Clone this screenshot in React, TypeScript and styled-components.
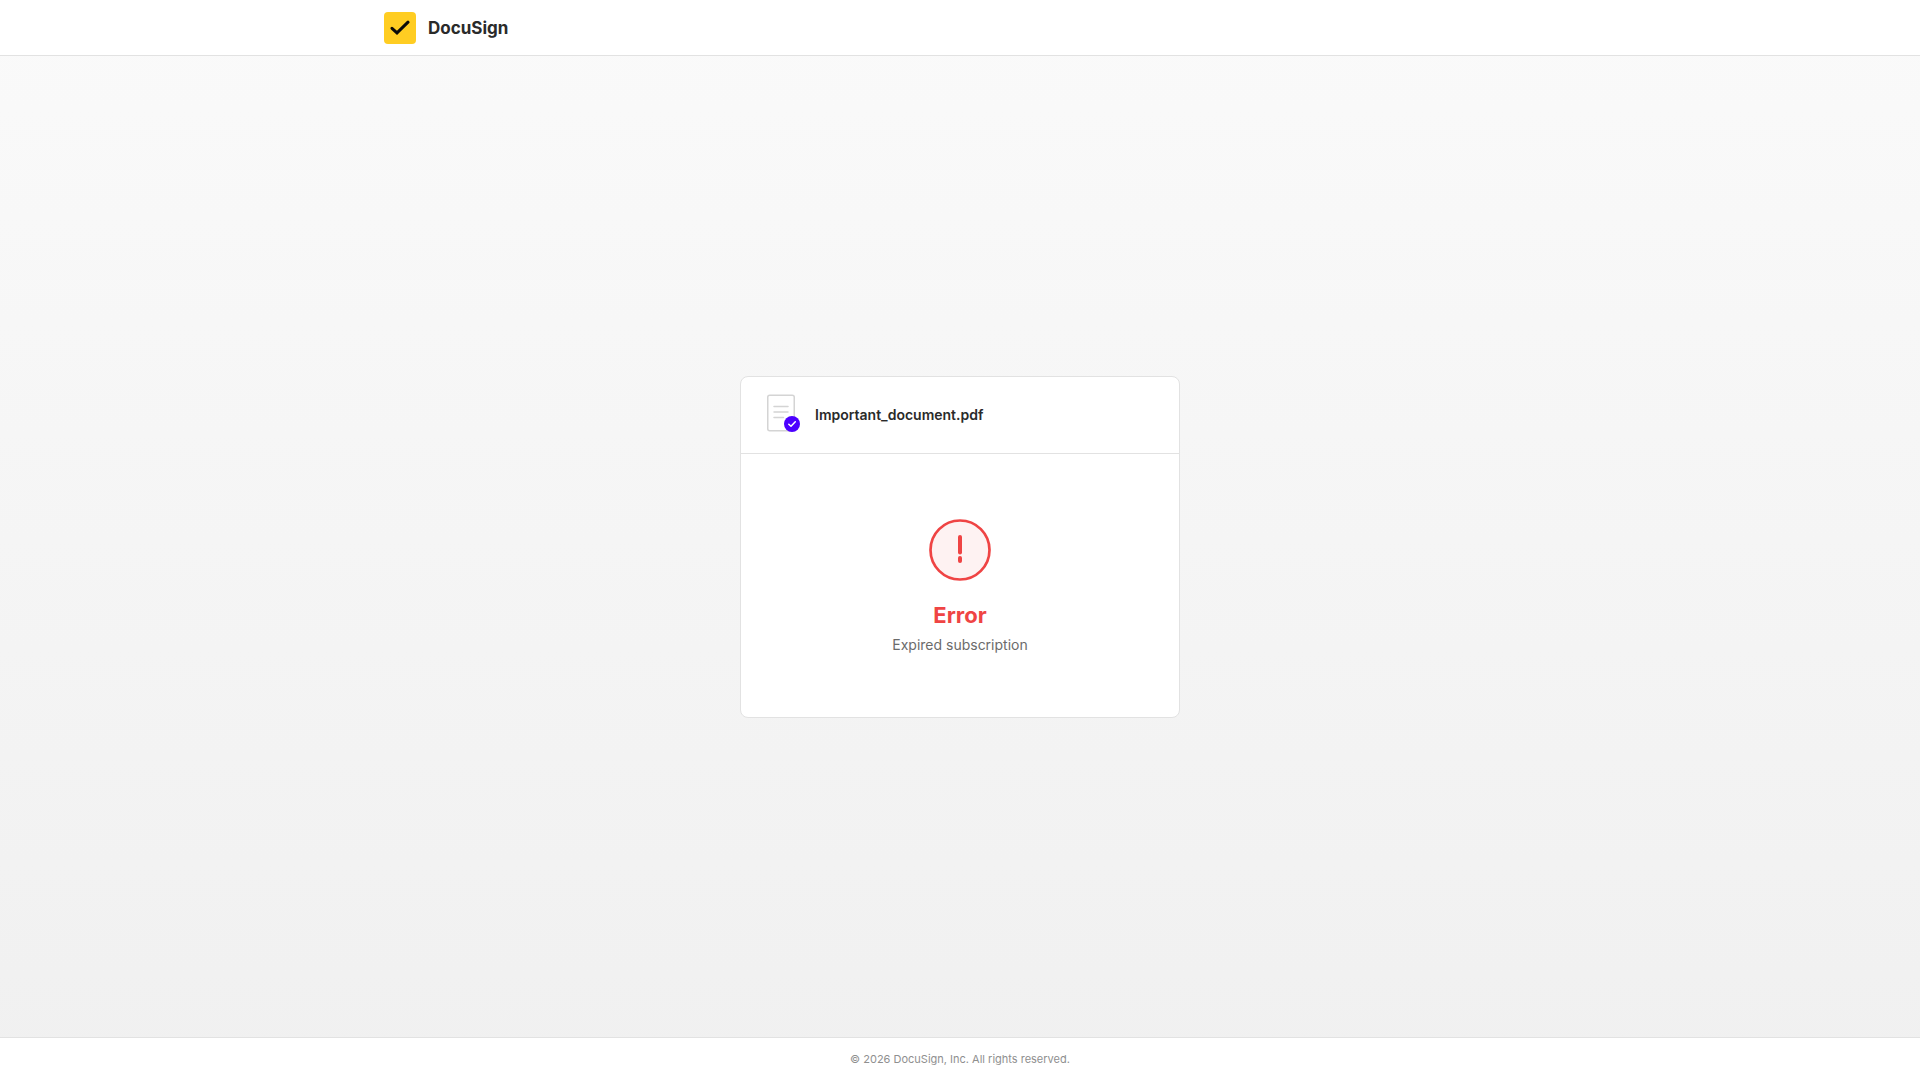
import React from "react";
import styled, { createGlobalStyle } from "styled-components";

const GlobalStyle = createGlobalStyle`
  *, *::before, *::after { box-sizing: border-box; }
  body {
    margin: 0;
    font-family: Inter, "Liberation Sans", sans-serif;
    color: #2a2a2a;
    -webkit-font-smoothing: antialiased;
  }
`;

const Page = styled.div`
  min-height: 100vh;
  display: flex;
  flex-direction: column;
  background: linear-gradient(180deg, #fafafa 0%, #f0f0f0 100%);
`;

const Header = styled.header`
  background: #fff;
  border-bottom: 1px solid #e2e2e2;
`;

const HeaderInner = styled.div`
  max-width: 1200px;
  margin: 0 auto;
  padding: 12px 24px 11px;
  display: flex;
  align-items: center;
  gap: 12px;
`;

const LogoTile = styled.span`
  width: 32px;
  height: 32px;
  display: flex;
  align-items: center;
  justify-content: center;
  border-radius: 4px;
  background: #ffcd22;
`;

const Brand = styled.span`
  font-size: 17px;
  line-height: 24px;
  font-weight: 700;
`;

const Main = styled.main`
  flex: 1;
  display: flex;
  align-items: center;
  justify-content: center;
  padding: 24px;
`;

const Card = styled.section`
  width: 100%;
  max-width: 440px;
  background: #fff;
  border: 1px solid #e2e2e2;
  border-radius: 8px;
`;

const FileRow = styled.div`
  display: flex;
  align-items: center;
  gap: 14px;
  padding: 16px 24px;
  border-bottom: 1px solid #e2e2e2;
`;

const FileName = styled.span`
  font-size: 14px;
  line-height: 20px;
  font-weight: 600;
`;

const Status = styled.div`
  display: flex;
  flex-direction: column;
  align-items: center;
  padding: 64px 24px;
  text-align: center;
`;

const StatusTitle = styled.h1`
  margin: 20px 0 0;
  font-size: 22px;
  line-height: 26px;
  font-weight: 700;
  color: #ef4444;
`;

const StatusText = styled.p`
  margin: 8px 0 0;
  font-size: 14px;
  line-height: 17px;
  color: #6b6b6b;
`;

const Footer = styled.footer`
  background: #fff;
  border-top: 1px solid #e2e2e2;
  padding: 14px 24px;
  text-align: center;
  font-size: 11px;
  line-height: 14px;
  color: #8f8f8f;
`;

function CheckMark() {
  return (
    <svg width="20" height="20" viewBox="0 0 20 20" fill="none" aria-hidden="true">
      <path d="M2 10.3L7 14.9L18 4.2" stroke="#0a0a0a" strokeWidth="3" strokeLinecap="round" strokeLinejoin="miter" />
    </svg>
  );
}

function DocumentIcon() {
  return (
    <svg width="36" height="44" viewBox="0 0 36 44" fill="none" aria-hidden="true">
      <rect x="2.75" y="2.25" width="26.5" height="35.5" rx="2" fill="#fff" stroke="#d4d4d4" strokeWidth="1.5" />
      <path d="M9 13.5H23M9 19H23M9 24.5H18.5" stroke="#d4d4d4" strokeWidth="1.5" strokeLinecap="round" />
      <circle cx="27" cy="31" r="8" fill="#4c00ff" />
      <path d="M23.8 31.2L26 33.2L30.3 28.8" stroke="#fff" strokeWidth="1.5" strokeLinecap="round" strokeLinejoin="round" />
    </svg>
  );
}

function ErrorIcon() {
  return (
    <svg width="64" height="64" viewBox="0 0 64 64" fill="none" aria-hidden="true">
      <circle cx="32" cy="32" r="29.5" fill="#fef2f2" stroke="#ef4444" strokeWidth="2.7" />
      <path d="M32 19V34.5" stroke="#ef4444" strokeWidth="4" strokeLinecap="round" />
      <rect x="30" y="38" width="4" height="7" rx="2" fill="#ef4444" />
    </svg>
  );
}

export default function App() {
  return (
    <Page>
      <GlobalStyle />
      <Header>
        <HeaderInner>
          <LogoTile>
            <CheckMark />
          </LogoTile>
          <Brand>DocuSign</Brand>
        </HeaderInner>
      </Header>
      <Main>
        <Card>
          <FileRow>
            <DocumentIcon />
            <FileName>Important_document.pdf</FileName>
          </FileRow>
          <Status role="alert">
            <ErrorIcon />
            <StatusTitle>Error</StatusTitle>
            <StatusText>Expired subscription</StatusText>
          </Status>
        </Card>
      </Main>
      <Footer>© 2026 DocuSign, Inc. All rights reserved.</Footer>
    </Page>
  );
}
